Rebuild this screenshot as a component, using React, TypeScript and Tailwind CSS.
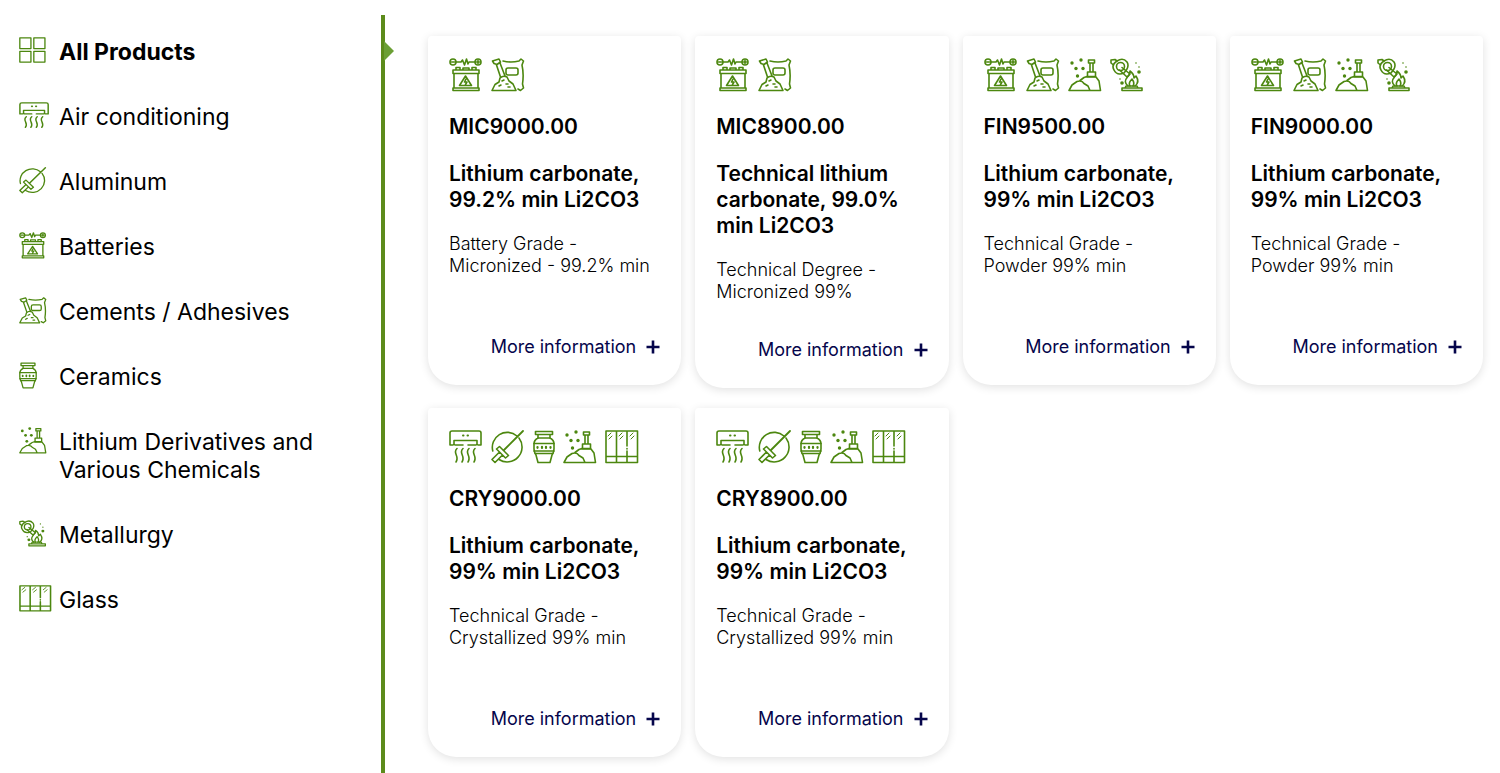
import type { ReactNode } from 'react';

type IconName = 'all' | 'air' | 'aluminum' | 'battery' | 'cement' | 'ceramic' | 'lithium' | 'metal' | 'glass';

const drawings: Record<IconName, ReactNode> = {
    all: (
        <>
            <rect x="1" y="1" width="13.500" height="13.500" />
            <rect x="18" y="1" width="13.500" height="13.500" />
            <rect x="1" y="18" width="13.500" height="13.500" />
            <rect x="18" y="18" width="13.500" height="13.500" />
        </>
    ),
    air: (
        <>
            <path d="M4 15H1V3Q1 1 3 1H30Q32 1 32 3V15H29M5 14.500V10.500H28V14.500M6 15H14M19 15H27" />
            <path d="M14 5.500h.5M18.500 5.500h.5" strokeWidth="2" />
            <path d="M8 18.500C3 23 11 26 7 32M14 18.500C9 23 17 26 13 32M20 18.500C15 23 23 26 19 32M26 18.500C21 23 29 26 25 32" />
        </>
    ),
    aluminum: (
        <>
            <path d="M26 6A14.900 14.900 0 0 0 1.800 21M8 29.500A14.900 14.900 0 0 0 28 8" />
            <path d="M32 1L13 20" strokeWidth="1.8" />
            <path d="M8.500 16.500L17.500 25.500L14.500 28L5.500 19ZM8.500 22L1 29.500L4 32.500L11.500 25" />
        </>
    ),
    battery: (
        <>
            <circle cx="4" cy="4" r="3" />
            <circle cx="29" cy="4" r="3" />
            <path d="M2.500 4h3M27.500 4h3M29 2.500v3M7 4h5l1.500-2 2 5 2-6 1.500 5 1-2h6" />
            <path d="M7 12V9.500h4V12M14 12V10h6V12M23 12V9.500h4V12M4 12H30V15.500H4ZM5 16V30M29 16V30M4 30H30V32.500H4Z" />
            <path d="M16.500 18L22.500 27.500H10.500ZM17 21L15.500 24H18L16.500 26.500" />
        </>
    ),
    cement: (
        <>
            <path d="M1.500 3L8 1L9.500 4L6 6.500L3 5.500ZM5.500 7L9.500 19M9 5L14 18" />
            <path d="M12 3Q20 5 28 3L30 1L32.500 3L31 7Q33 16 31.500 26L32.500 30L29.500 32.500L27 31" />
            <rect x="15" y="10" width="12" height="7" rx="2" />
            <path d="M1 32.500L4 26.500L8 24L9 20Q12 17 16 19L18 23L22 26L25 32.500ZM11 23l2-1M15 26h2M8 28l2-1M17 29h2" />
        </>
    ),
    ceramic: (
        <>
            <path d="M2.500 1.500H19.500V4.500H2.500ZM5 4.500V8Q1 10 1 14V19Q1 22 3 25L5 32.500H17L19 25Q21 22 21 19V14Q21 10 17 8V4.500" />
            <path d="M5 8H17M1 13.500H21M1 21H21M2 23.500H20" />
            <path d="M4.500 17v.8M9 16.800v1.200M13 16.800v1.200M17.500 17v.8" strokeWidth="2.200" />
        </>
    ),
    lithium: (
        <>
            <path d="M20.500 2H26.500V5H20.500ZM22 5V14M25 5V14M19.500 14H27.500V18.500H19.500Z" />
            <path d="M1 32.500L4 27L9 23.500Q14 22 16 25.500L20 28L22 32.500ZM12 22.500L16 19.500L19 18.500M19 19H28L31 23L32.500 32.500H22" />
            <g fill="currentColor" stroke="none">
                <circle cx="4" cy="5" r="1.700" />
                <circle cx="13" cy="2" r="1.700" />
                <circle cx="8" cy="10.500" r="1.700" />
                <circle cx="15" cy="10.500" r="1.700" />
                <circle cx="9.500" cy="18" r="1.700" />
            </g>
        </>
    ),
    metal: (
        <>
            <path d="M3.500 7L1 5V2L5 1.500L7 3" />
            <path d="M7 3Q13-1 17 4Q19 7 17 11L14 15Q7 18 4 12Q1 7 7 3Z" />
            <circle cx="10.500" cy="8.500" r="4" />
            <path d="M12 9.500L20 16L17 19L9.500 12" />
            <path d="M18 28Q13 24 17.500 19Q20 17 20 13Q24 16 24 20L26 18Q30 24 25 28M20 28Q18 25 22 21Q25 25 23 28" />
            <path d="M16 28H27L28 30H32V32.500H12V30H15ZM15 30H28" />
            <g fill="currentColor" stroke="none">
                <circle cx="29" cy="14" r="1.800" />
                <circle cx="12" cy="25" r="1.800" />
                <circle cx="26" cy="5" r=".8" />
                <circle cx="29" cy="9" r=".8" />
                <circle cx="10" cy="21" r=".8" />
            </g>
        </>
    ),
    glass: (
        <>
            <path d="M1 1H32.500V32.500H1ZM11.500 1V32M22 1V16M22 18.500v.5M22 21V32M1 26.500H32" />
            <path d="M3 6L6 3M4 9L7 6M14 6L17 3M15 9L18 6M25 6L28 3M26 9L29 6" strokeWidth="1" />
        </>
    ),
};

const Icon = ({ name, className }: { name: IconName; className: string }) => (
    <svg
        viewBox={name === 'ceramic' ? '0 0 22 34' : '0 0 34 34'}
        preserveAspectRatio="none"
        className={`shrink-0 text-[#4c870f] ${className}`}
        fill="none"
        stroke="currentColor"
        strokeWidth="1.6"
        strokeLinejoin="round"
        strokeLinecap="round"
        aria-hidden="true"
    >
        {drawings[name]}
    </svg>
);

const categories: { icon: IconName; label: string; size: string }[] = [
    { icon: 'all', label: 'All Products', size: 'w-7' },
    { icon: 'air', label: 'Air conditioning', size: 'w-[31px]' },
    { icon: 'aluminum', label: 'Aluminum', size: 'w-7' },
    { icon: 'battery', label: 'Batteries', size: 'w-7' },
    { icon: 'cement', label: 'Cements / Adhesives', size: 'w-7' },
    { icon: 'ceramic', label: 'Ceramics', size: 'w-[18px]' },
    { icon: 'lithium', label: 'Lithium Derivatives and Various Chemicals', size: 'w-7' },
    { icon: 'metal', label: 'Metallurgy', size: 'w-7' },
    { icon: 'glass', label: 'Glass', size: 'w-[33px]' },
];

const crystalIcons: IconName[] = ['air', 'aluminum', 'ceramic', 'lithium', 'glass'];
const powderIcons: IconName[] = ['battery', 'cement', 'lithium', 'metal'];

const products: { code: string; title: string; grade: string; detail: string; icons: IconName[] }[] = [
    { code: 'MIC9000.00', title: 'Lithium carbonate, 99.2% min Li2CO3', grade: 'Battery Grade -', detail: 'Micronized - 99.2% min', icons: ['battery', 'cement'] },
    { code: 'MIC8900.00', title: 'Technical lithium carbonate, 99.0% min Li2CO3', grade: 'Technical Degree -', detail: 'Micronized 99%', icons: ['battery', 'cement'] },
    { code: 'FIN9500.00', title: 'Lithium carbonate, 99% min Li2CO3', grade: 'Technical Grade -', detail: 'Powder 99% min', icons: powderIcons },
    { code: 'FIN9000.00', title: 'Lithium carbonate, 99% min Li2CO3', grade: 'Technical Grade -', detail: 'Powder 99% min', icons: powderIcons },
    { code: 'CRY9000.00', title: 'Lithium carbonate, 99% min Li2CO3', grade: 'Technical Grade -', detail: 'Crystallized 99% min', icons: crystalIcons },
    { code: 'CRY8900.00', title: 'Lithium carbonate, 99% min Li2CO3', grade: 'Technical Grade -', detail: 'Crystallized 99% min', icons: crystalIcons },
];

export default function App() {
    return (
        <div className="flex min-h-screen bg-white pt-[15px] font-['Inter',sans-serif] text-black">
            <nav className="relative w-[385px] shrink-0 border-r-4 border-[#5c8b1b] pl-[19px] pt-[22px]">
                <ul className="flex flex-col gap-9">
                    {categories.map((item, i) => (
                        <li key={item.icon}>
                            <a href="#" className="flex items-start">
                                <span className="flex w-10 shrink-0">
                                    <Icon name={item.icon} className={`h-[27px] ${item.size}`} />
                                </span>
                                <span className={`max-w-[270px] pt-px text-[23px] leading-[28px] ${i === 0 ? 'font-bold' : ''}`}>
                                    {item.label}
                                </span>
                            </a>
                        </li>
                    ))}
                </ul>
                {/* Marker for the selected category */}
                <span className="absolute -right-[13px] top-[26px] h-5 w-[10px] bg-[#6b9f35] [clip-path:polygon(0_0,100%_50%,0_100%)]" />
            </nav>

            <main className="grid flex-1 grid-cols-4 content-start items-start gap-x-[14px] gap-y-5 pb-4 pl-[43px] pr-[17px] pt-[21px]">
                {products.map((product) => (
                    <article
                        key={product.code}
                        className="flex min-h-[349px] flex-col rounded-t-sm rounded-b-[28px] bg-white px-[21px] pb-[26px] pt-[22px] shadow-[0_2px_10px_rgba(0,0,0,0.12)]"
                    >
                        <div className="flex gap-2">
                            {product.icons.map((icon) => (
                                <Icon key={icon} name={icon} className={icon === 'ceramic' ? 'h-[34px] w-[22px]' : 'h-[34px] w-[34px]'} />
                            ))}
                        </div>
                        <h2 className="mt-[21px] text-[21px] leading-[28px] font-semibold">{product.code}</h2>
                        <h3 className="mt-5 text-[21px] leading-[26px] font-semibold">{product.title}</h3>
                        <p className="mt-5 text-lg leading-[22px] font-light">
                            {product.grade}
                            <br />
                            {product.detail}
                        </p>
                        <div className="mt-auto flex justify-end pt-[35px]">
                            <a href="#" className="flex items-center gap-[10px] text-[18px] leading-6 text-[#05054b]">
                                More information
                                <svg viewBox="0 0 14 14" className="size-[14px]" stroke="currentColor" strokeWidth="2.6" aria-hidden="true">
                                    <path d="M7 0.500V13.500M0.500 7H13.500" />
                                </svg>
                            </a>
                        </div>
                    </article>
                ))}
            </main>
        </div>
    );
}
